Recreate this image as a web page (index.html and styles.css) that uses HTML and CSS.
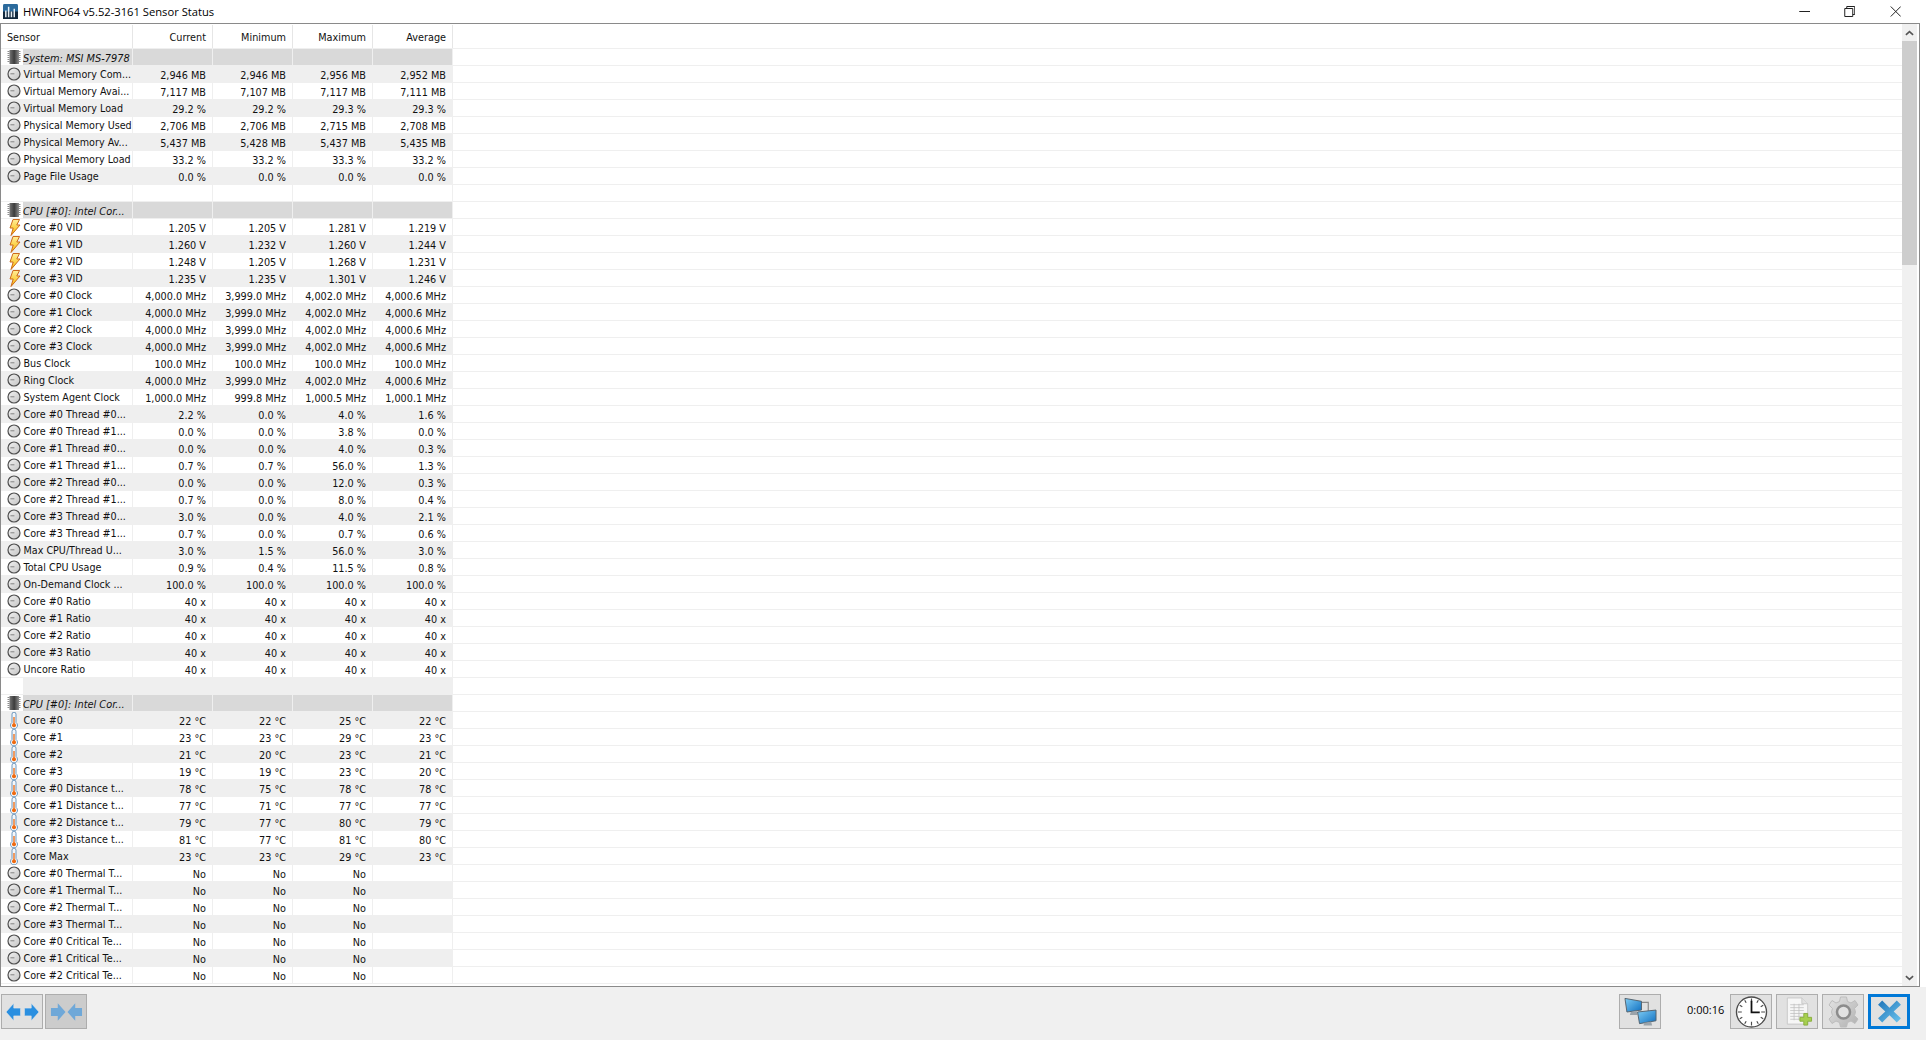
FILE: index.html
```html
<!DOCTYPE html>
<html lang="en">
<head>
    <meta charset="UTF-8">
    <title>HWiNFO64 v5.52-3161 Sensor Status</title>
    <link rel="stylesheet" href="styles.css">
</head>
<body>
    <svg class="defs" width="0" height="0">
        <defs>
            <linearGradient id="faceGrad" x1="0" y1="0" x2="1" y2="1">
                <stop offset="0" stop-color="#f2f2f2"/>
                <stop offset="1" stop-color="#c4c4c4"/>
            </linearGradient>
            <linearGradient id="boltGrad" x1="0" y1="0" x2="0" y2="1">
                <stop offset="0" stop-color="#ffee9a"/>
                <stop offset="1" stop-color="#f8b800"/>
            </linearGradient>
            <linearGradient id="chipGrad" x1="0" y1="0" x2="1" y2="0">
                <stop offset="0" stop-color="#757575"/>
                <stop offset="0.5" stop-color="#3c3c3c"/>
                <stop offset="1" stop-color="#8e8e8e"/>
            </linearGradient>
            <linearGradient id="screenGrad" x1="0" y1="0" x2="1" y2="1">
                <stop offset="0" stop-color="#7fcdf5"/>
                <stop offset="1" stop-color="#0f6fc0"/>
            </linearGradient>
            <linearGradient id="xGrad" x1="0" y1="0" x2="1" y2="1">
                <stop offset="0" stop-color="#1f74b8"/>
                <stop offset="1" stop-color="#6cc4ee"/>
            </linearGradient>
            <linearGradient id="gearGrad" x1="0" y1="0" x2="1" y2="1">
                <stop offset="0" stop-color="#e4e4e4"/>
                <stop offset="1" stop-color="#b0b0b0"/>
            </linearGradient>
            <symbol id="i-clock" viewBox="0 0 14 14">
                <circle cx="7" cy="7" r="6" fill="url(#faceGrad)" stroke="#4e4e4e" stroke-width="1.2"/>
                <path d="M3.4 6.8H7.4" fill="none" stroke="#777" stroke-width=".9"/>
            </symbol>
            <symbol id="i-bolt" viewBox="0 0 16 17">
                <path d="M7 .5H13.500L10.800 6H14L5 16.500L7.200 9H4Z" fill="url(#boltGrad)" stroke="#cc6a1c" stroke-width="1"/>
            </symbol>
            <symbol id="i-temp" viewBox="0 0 16 17">
                <path d="M6 10.500V2.200a2 2 0 0 1 4 0V10.500a3.500 3.500 0 1 1-4 0Z" fill="#f4f7fa" stroke="#5f8db8" stroke-width=".9"/>
                <path d="M8 5V12" stroke="#ee6a10" stroke-width="1.300"/>
                <circle cx="8" cy="13.300" r="2" fill="#ee6a10"/>
            </symbol>
            <symbol id="i-chip" viewBox="0 0 14 14">
                <rect x="2.500" y="0" width="9.500" height="14" fill="url(#chipGrad)"/>
                <path d="M.5 1.500H2.500M.5 3.500H2.500M.5 5.500H2.500M.5 7.500H2.500M.5 9.500H2.500M.5 11.500H2.500M12 1.500H13.500M12 3.500H13.500M12 5.500H13.500M12 7.500H13.500M12 9.500H13.500M12 11.500H13.500" stroke="#8d8d8d" stroke-width="1"/>
            </symbol>
        </defs>
    </svg>

    <div class="titlebar">
        <svg class="app-icon" viewBox="0 0 16 16">
            <rect width="16" height="16" rx="1.500" fill="#2b6a9c"/>
            <rect y="8" width="16" height="8" fill="#12283d"/>
            <path d="M3 14V7M6 14V3M9 14V8M12 14V5" stroke="#e6eef5" stroke-width="1.600"/>
        </svg>
        <span class="title">HWiNFO64 v5.52-3161 Sensor Status</span>
        <div class="win-buttons">
            <svg class="win-btn" viewBox="0 0 11 11"><path d="M0 5.500H11" stroke="#222" fill="none"/></svg>
            <svg class="win-btn" viewBox="0 0 11 11"><path d="M.5 2.500H8.500V10.500H.5ZM2.500 2.500V.5H10.500V8.500H8.500" stroke="#222" fill="none"/></svg>
            <svg class="win-btn" viewBox="0 0 11 11"><path d="M.5 .5L10.500 10.500M10.500 .5L.5 10.500" stroke="#222" fill="none"/></svg>
        </div>
    </div>

    <div class="main">
        <div class="sensors">
            <div class="row head"><span class="name">Sensor</span><span>Current</span><span>Minimum</span><span>Maximum</span><span>Average</span></div>

            <div class="row group"><svg class="ico"><use href="#i-chip"/></svg><span class="name">System: MSI MS-7978</span><span></span><span></span><span></span><span></span></div>
            <div class="row"><svg class="ico"><use href="#i-clock"/></svg><span class="name">Virtual Memory Com...</span><span>2,946 MB</span><span>2,946 MB</span><span>2,956 MB</span><span>2,952 MB</span></div>
            <div class="row"><svg class="ico"><use href="#i-clock"/></svg><span class="name">Virtual Memory Avai...</span><span>7,117 MB</span><span>7,107 MB</span><span>7,117 MB</span><span>7,111 MB</span></div>
            <div class="row"><svg class="ico"><use href="#i-clock"/></svg><span class="name">Virtual Memory Load</span><span>29.2 %</span><span>29.2 %</span><span>29.3 %</span><span>29.3 %</span></div>
            <div class="row"><svg class="ico"><use href="#i-clock"/></svg><span class="name">Physical Memory Used</span><span>2,706 MB</span><span>2,706 MB</span><span>2,715 MB</span><span>2,708 MB</span></div>
            <div class="row"><svg class="ico"><use href="#i-clock"/></svg><span class="name">Physical Memory Av...</span><span>5,437 MB</span><span>5,428 MB</span><span>5,437 MB</span><span>5,435 MB</span></div>
            <div class="row"><svg class="ico"><use href="#i-clock"/></svg><span class="name">Physical Memory Load</span><span>33.2 %</span><span>33.2 %</span><span>33.3 %</span><span>33.2 %</span></div>
            <div class="row"><svg class="ico"><use href="#i-clock"/></svg><span class="name">Page File Usage</span><span>0.0 %</span><span>0.0 %</span><span>0.0 %</span><span>0.0 %</span></div>
            <div class="row blank"><span class="name"></span><span></span><span></span><span></span><span></span></div>

            <div class="row group"><svg class="ico"><use href="#i-chip"/></svg><span class="name">CPU [#0]: Intel Cor...</span><span></span><span></span><span></span><span></span></div>
            <div class="row"><svg class="ico tall"><use href="#i-bolt"/></svg><span class="name">Core #0 VID</span><span>1.205 V</span><span>1.205 V</span><span>1.281 V</span><span>1.219 V</span></div>
            <div class="row"><svg class="ico tall"><use href="#i-bolt"/></svg><span class="name">Core #1 VID</span><span>1.260 V</span><span>1.232 V</span><span>1.260 V</span><span>1.244 V</span></div>
            <div class="row"><svg class="ico tall"><use href="#i-bolt"/></svg><span class="name">Core #2 VID</span><span>1.248 V</span><span>1.205 V</span><span>1.268 V</span><span>1.231 V</span></div>
            <div class="row"><svg class="ico tall"><use href="#i-bolt"/></svg><span class="name">Core #3 VID</span><span>1.235 V</span><span>1.235 V</span><span>1.301 V</span><span>1.246 V</span></div>
            <div class="row"><svg class="ico"><use href="#i-clock"/></svg><span class="name">Core #0 Clock</span><span>4,000.0 MHz</span><span>3,999.0 MHz</span><span>4,002.0 MHz</span><span>4,000.6 MHz</span></div>
            <div class="row"><svg class="ico"><use href="#i-clock"/></svg><span class="name">Core #1 Clock</span><span>4,000.0 MHz</span><span>3,999.0 MHz</span><span>4,002.0 MHz</span><span>4,000.6 MHz</span></div>
            <div class="row"><svg class="ico"><use href="#i-clock"/></svg><span class="name">Core #2 Clock</span><span>4,000.0 MHz</span><span>3,999.0 MHz</span><span>4,002.0 MHz</span><span>4,000.6 MHz</span></div>
            <div class="row"><svg class="ico"><use href="#i-clock"/></svg><span class="name">Core #3 Clock</span><span>4,000.0 MHz</span><span>3,999.0 MHz</span><span>4,002.0 MHz</span><span>4,000.6 MHz</span></div>
            <div class="row"><svg class="ico"><use href="#i-clock"/></svg><span class="name">Bus Clock</span><span>100.0 MHz</span><span>100.0 MHz</span><span>100.0 MHz</span><span>100.0 MHz</span></div>
            <div class="row"><svg class="ico"><use href="#i-clock"/></svg><span class="name">Ring Clock</span><span>4,000.0 MHz</span><span>3,999.0 MHz</span><span>4,002.0 MHz</span><span>4,000.6 MHz</span></div>
            <div class="row"><svg class="ico"><use href="#i-clock"/></svg><span class="name">System Agent Clock</span><span>1,000.0 MHz</span><span>999.8 MHz</span><span>1,000.5 MHz</span><span>1,000.1 MHz</span></div>
            <div class="row"><svg class="ico"><use href="#i-clock"/></svg><span class="name">Core #0 Thread #0...</span><span>2.2 %</span><span>0.0 %</span><span>4.0 %</span><span>1.6 %</span></div>
            <div class="row"><svg class="ico"><use href="#i-clock"/></svg><span class="name">Core #0 Thread #1...</span><span>0.0 %</span><span>0.0 %</span><span>3.8 %</span><span>0.0 %</span></div>
            <div class="row"><svg class="ico"><use href="#i-clock"/></svg><span class="name">Core #1 Thread #0...</span><span>0.0 %</span><span>0.0 %</span><span>4.0 %</span><span>0.3 %</span></div>
            <div class="row"><svg class="ico"><use href="#i-clock"/></svg><span class="name">Core #1 Thread #1...</span><span>0.7 %</span><span>0.7 %</span><span>56.0 %</span><span>1.3 %</span></div>
            <div class="row"><svg class="ico"><use href="#i-clock"/></svg><span class="name">Core #2 Thread #0...</span><span>0.0 %</span><span>0.0 %</span><span>12.0 %</span><span>0.3 %</span></div>
            <div class="row"><svg class="ico"><use href="#i-clock"/></svg><span class="name">Core #2 Thread #1...</span><span>0.7 %</span><span>0.0 %</span><span>8.0 %</span><span>0.4 %</span></div>
            <div class="row"><svg class="ico"><use href="#i-clock"/></svg><span class="name">Core #3 Thread #0...</span><span>3.0 %</span><span>0.0 %</span><span>4.0 %</span><span>2.1 %</span></div>
            <div class="row"><svg class="ico"><use href="#i-clock"/></svg><span class="name">Core #3 Thread #1...</span><span>0.7 %</span><span>0.0 %</span><span>0.7 %</span><span>0.6 %</span></div>
            <div class="row"><svg class="ico"><use href="#i-clock"/></svg><span class="name">Max CPU/Thread U...</span><span>3.0 %</span><span>1.5 %</span><span>56.0 %</span><span>3.0 %</span></div>
            <div class="row"><svg class="ico"><use href="#i-clock"/></svg><span class="name">Total CPU Usage</span><span>0.9 %</span><span>0.4 %</span><span>11.5 %</span><span>0.8 %</span></div>
            <div class="row"><svg class="ico"><use href="#i-clock"/></svg><span class="name">On-Demand Clock ...</span><span>100.0 %</span><span>100.0 %</span><span>100.0 %</span><span>100.0 %</span></div>
            <div class="row"><svg class="ico"><use href="#i-clock"/></svg><span class="name">Core #0 Ratio</span><span>40 x</span><span>40 x</span><span>40 x</span><span>40 x</span></div>
            <div class="row"><svg class="ico"><use href="#i-clock"/></svg><span class="name">Core #1 Ratio</span><span>40 x</span><span>40 x</span><span>40 x</span><span>40 x</span></div>
            <div class="row"><svg class="ico"><use href="#i-clock"/></svg><span class="name">Core #2 Ratio</span><span>40 x</span><span>40 x</span><span>40 x</span><span>40 x</span></div>
            <div class="row"><svg class="ico"><use href="#i-clock"/></svg><span class="name">Core #3 Ratio</span><span>40 x</span><span>40 x</span><span>40 x</span><span>40 x</span></div>
            <div class="row"><svg class="ico"><use href="#i-clock"/></svg><span class="name">Uncore Ratio</span><span>40 x</span><span>40 x</span><span>40 x</span><span>40 x</span></div>
            <div class="row blank"><span class="name"></span><span></span><span></span><span></span><span></span></div>

            <div class="row group"><svg class="ico"><use href="#i-chip"/></svg><span class="name">CPU [#0]: Intel Cor...</span><span></span><span></span><span></span><span></span></div>
            <div class="row"><svg class="ico tall"><use href="#i-temp"/></svg><span class="name">Core #0</span><span>22 °C</span><span>22 °C</span><span>25 °C</span><span>22 °C</span></div>
            <div class="row"><svg class="ico tall"><use href="#i-temp"/></svg><span class="name">Core #1</span><span>23 °C</span><span>23 °C</span><span>29 °C</span><span>23 °C</span></div>
            <div class="row"><svg class="ico tall"><use href="#i-temp"/></svg><span class="name">Core #2</span><span>21 °C</span><span>20 °C</span><span>23 °C</span><span>21 °C</span></div>
            <div class="row"><svg class="ico tall"><use href="#i-temp"/></svg><span class="name">Core #3</span><span>19 °C</span><span>19 °C</span><span>23 °C</span><span>20 °C</span></div>
            <div class="row"><svg class="ico tall"><use href="#i-temp"/></svg><span class="name">Core #0 Distance t...</span><span>78 °C</span><span>75 °C</span><span>78 °C</span><span>78 °C</span></div>
            <div class="row"><svg class="ico tall"><use href="#i-temp"/></svg><span class="name">Core #1 Distance t...</span><span>77 °C</span><span>71 °C</span><span>77 °C</span><span>77 °C</span></div>
            <div class="row"><svg class="ico tall"><use href="#i-temp"/></svg><span class="name">Core #2 Distance t...</span><span>79 °C</span><span>77 °C</span><span>80 °C</span><span>79 °C</span></div>
            <div class="row"><svg class="ico tall"><use href="#i-temp"/></svg><span class="name">Core #3 Distance t...</span><span>81 °C</span><span>77 °C</span><span>81 °C</span><span>80 °C</span></div>
            <div class="row"><svg class="ico tall"><use href="#i-temp"/></svg><span class="name">Core Max</span><span>23 °C</span><span>23 °C</span><span>29 °C</span><span>23 °C</span></div>
            <div class="row"><svg class="ico"><use href="#i-clock"/></svg><span class="name">Core #0 Thermal T...</span><span>No</span><span>No</span><span>No</span><span></span></div>
            <div class="row"><svg class="ico"><use href="#i-clock"/></svg><span class="name">Core #1 Thermal T...</span><span>No</span><span>No</span><span>No</span><span></span></div>
            <div class="row"><svg class="ico"><use href="#i-clock"/></svg><span class="name">Core #2 Thermal T...</span><span>No</span><span>No</span><span>No</span><span></span></div>
            <div class="row"><svg class="ico"><use href="#i-clock"/></svg><span class="name">Core #3 Thermal T...</span><span>No</span><span>No</span><span>No</span><span></span></div>
            <div class="row"><svg class="ico"><use href="#i-clock"/></svg><span class="name">Core #0 Critical Te...</span><span>No</span><span>No</span><span>No</span><span></span></div>
            <div class="row"><svg class="ico"><use href="#i-clock"/></svg><span class="name">Core #1 Critical Te...</span><span>No</span><span>No</span><span>No</span><span></span></div>
            <div class="row"><svg class="ico"><use href="#i-clock"/></svg><span class="name">Core #2 Critical Te...</span><span>No</span><span>No</span><span>No</span><span></span></div>
        </div>
        <div class="scrollbar">
            <div class="arrow"><svg viewBox="0 0 10 6"><path d="M1 5L5 1.500L9 5" fill="none" stroke="#555" stroke-width="1.800"/></svg></div>
            <div class="track"><div class="thumb"></div></div>
            <div class="arrow"><svg viewBox="0 0 10 6"><path d="M1 1L5 4.500L9 1" fill="none" stroke="#555" stroke-width="1.800"/></svg></div>
        </div>
    </div>

    <div class="toolbar">
        <div class="tool-group nav">
            <button class="tool">
                <svg class="arrows" viewBox="0 0 34 18"><path d="M0 9L8 0V5H15V13H8V18Z" fill="#2a8fe0" stroke="#e8e8e8" stroke-width=".6"/><path d="M34 9L26 0V5H19V13H26V18Z" fill="#2a8fe0" stroke="#e8e8e8" stroke-width=".6"/></svg>
            </button>
            <button class="tool dim">
                <svg class="arrows" viewBox="0 0 34 18"><path d="M16 9L8 0V5H1V13H8V18Z" fill="#6fa8d8"/><path d="M18 9L26 0V5H33V13H26V18Z" fill="#6fa8d8"/></svg>
            </button>
        </div>
        <button class="tool network">
            <svg class="large" viewBox="0 0 34 30">
                <path d="M12 5H25V16" fill="none" stroke="#8a8a8a" stroke-width="1.200"/>
                <path d="M1 1L18 4V13L3 15Z" fill="url(#screenGrad)" stroke="#55636e"/>
                <path d="M7 15L6 18H14L13 14" fill="#9aa3aa"/>
                <path d="M14 15L33 13V24L16 27Z" fill="url(#screenGrad)" stroke="#55636e"/>
                <path d="M21 26L20 29H29L28 25" fill="#9aa3aa"/>
            </svg>
        </button>
        <span class="timer">0:00:16</span>
        <div class="tool-group actions">
            <button class="tool">
                <svg class="large" viewBox="0 0 33 33">
                    <circle cx="16.500" cy="16.500" r="15.500" fill="#fff" stroke="#4c4c4c" stroke-width="1.400"/>
                    <path d="M16.500 2.500V6.500M16.500 26.500V30.500M2.500 16.500H6.500M26.500 16.500H30.500M9.500 4.400L11 7M23.500 4.400L22 7M4.400 9.500L7 11M28.600 9.500L26 11M4.400 23.500L7 22M28.600 23.500L26 22M9.500 28.600L11 26M23.500 28.600L22 26" stroke="#4c4c4c" stroke-width="1.200"/>
                    <path d="M16.500 5V17H25" fill="none" stroke="#111" stroke-width="1.800"/>
                </svg>
            </button>
            <button class="tool">
                <svg class="large" viewBox="0 0 33 33">
                    <path d="M6 2H21L27 8V29H6Z" fill="#f6f6f6" stroke="#c8c8c8"/>
                    <path d="M21 2V8H27" fill="#e2e2e2" stroke="#c8c8c8"/>
                    <path d="M9 9H23M9 12H23M9 15H23M9 18H23M9 21H23M9 24H20M13 8V25M18 8V25" stroke="#c0c0c0" stroke-width=".8"/>
                    <path d="M23 18H27V22H31V26H27V30H23V26H19V22H23Z" fill="#a6cf4f" stroke="#8aae40"/>
                </svg>
            </button>
            <button class="tool">
                <svg class="large" viewBox="0 0 32 32">
                    <path d="M13 1H19L20 5.500L23.500 7L27.500 4.500L30.500 9L27 12.500L28 16L27 19.500L30.500 23L27.500 27.500L23.500 25L20 26.500L19 31H13L12 26.500L8.500 25L4.500 27.500L1.500 23L5 19.500L4 16L5 12.500L1.500 9L4.500 4.500L8.500 7L12 5.500Z" fill="url(#gearGrad)" stroke="#bdbdbd"/>
                    <circle cx="16" cy="16" r="6.500" fill="#e2e2e2" stroke="#8c8c8c" stroke-width="2.500"/>
                </svg>
            </button>
            <button class="tool focus">
                <svg class="cross" viewBox="0 0 24 24"><path d="M5 1.500L12 8.500L19 1.500L23 5.500L16 12L23 18.500L19 22.500L12 15.500L5 22.500L1 18.500L8 12L1 5.500Z" fill="url(#xGrad)"/></svg>
            </button>
        </div>
    </div>
</body>
</html>
```

FILE: styles.css
```css
html, body {
    margin: 0;
    padding: 0;
    height: 100%;
    overflow: hidden;
}
body {
    font-family: "DejaVu Sans", Verdana, sans-serif;
    font-size: 9.7px;
    color: #111;
    background-color: #ffffff;
    display: flex;
    flex-direction: column;
}
.defs {
    display: block;
    height: 0;
}
.titlebar {
    height: 23px;
    display: flex;
    align-items: center;
    padding-left: 3px;
    background-color: #ffffff;
    box-sizing: border-box;
}
.app-icon {
    width: 15px;
    height: 15px;
    margin-right: 5px;
}
.title {
    font-family: "Open Sans", sans-serif;
    font-size: 11.2px;
    color: #000;
}
.win-buttons {
    margin-left: auto;
    margin-right: 8px;
    display: flex;
}
.win-btn {
    width: 11px;
    height: 11px;
    padding: 0 17.25px;
}
.main {
    height: 964px;
    box-sizing: border-box;
    margin-right: 6px;
    border: 1px solid #8a8a8a;
    display: flex;
    overflow: hidden;
    background-color: #ffffff;
}
.sensors {
    flex: 1;
    padding-top: 1px;
    overflow: hidden;
}
.row {
    display: grid;
    grid-template-columns: 132px 80px 80px 80px 80px;
    height: 17px;
    position: relative;
    box-sizing: border-box;
    border-bottom: 1px solid #efefef;
}
.row > span {
    line-height: 19px;
    text-align: right;
    padding-right: 6px;
    white-space: nowrap;
    overflow: hidden;
    border-right: 1px solid #efefef;
    box-sizing: border-box;
}
.row > .name {
    font-size: 9.6px;
    line-height: 18px;
    text-align: left;
    padding-left: 22.5px;
    padding-right: 0;
}
.row:nth-child(odd) > span {
    background-color: #efefef;
}
.row.group > span {
    background-color: #d9d9d9;
}
.row.group > .name {
    font-size: 9.8px;
    line-height: 19px;
    font-style: italic;
}
.row.group > .name, .row.blank > .name {
    background-clip: content-box;
    padding-left: 22px;
}
.ico {
    position: absolute;
    left: 6px;
    top: 1px;
    width: 14px;
    height: 14px;
    z-index: 1;
}
.ico.tall {
    left: 5px;
    top: 0;
    width: 16px;
    height: 17px;
}
.row.head {
    height: 24px;
}
.row.head > span {
    background-color: #ffffff;
    line-height: 26px;
    border-right: 1px solid #e6e6e6;
}
.row.head > .name {
    padding-left: 6px;
}
.scrollbar {
    width: 15px;
    margin-right: 2px;
    display: flex;
    flex-direction: column;
    background-color: #f0f0f0;
}
.arrow {
    height: 17px;
    display: flex;
    align-items: center;
    justify-content: center;
}
.arrow svg {
    width: 9px;
    height: 6px;
}
.track {
    flex: 1;
}
.thumb {
    height: 224px;
    background-color: #cdcdcd;
}
.toolbar {
    flex: 1;
    display: flex;
    align-items: flex-start;
    padding: 7px 16px 0 1px;
    background-color: #f0f0f0;
}
.tool-group {
    display: flex;
}
.tool-group.nav {
    gap: 2px;
    margin-right: auto;
}
.tool-group.actions {
    gap: 4px;
}
.tool {
    width: 42px;
    height: 35px;
    padding: 0;
    margin: 0;
    display: flex;
    align-items: center;
    justify-content: center;
    background-color: #e1e1e1;
    border: 1px solid #adadad;
    box-sizing: border-box;
    overflow: hidden;
}
.tool.dim {
    background-color: #cccccc;
}
.tool.focus {
    border: 3px solid #0078d7;
}
.tool svg.arrows {
    width: 33px;
    height: 18px;
}
.tool svg.large {
    width: 33px;
    height: 32px;
}
.tool svg.cross {
    width: 25px;
    height: 25px;
}
.timer {
    font-family: "Open Sans", sans-serif;
    font-size: 11px;
    line-height: 32px;
    width: 69px;
    box-sizing: border-box;
    padding-left: 26px;
    color: #000;
}
```
